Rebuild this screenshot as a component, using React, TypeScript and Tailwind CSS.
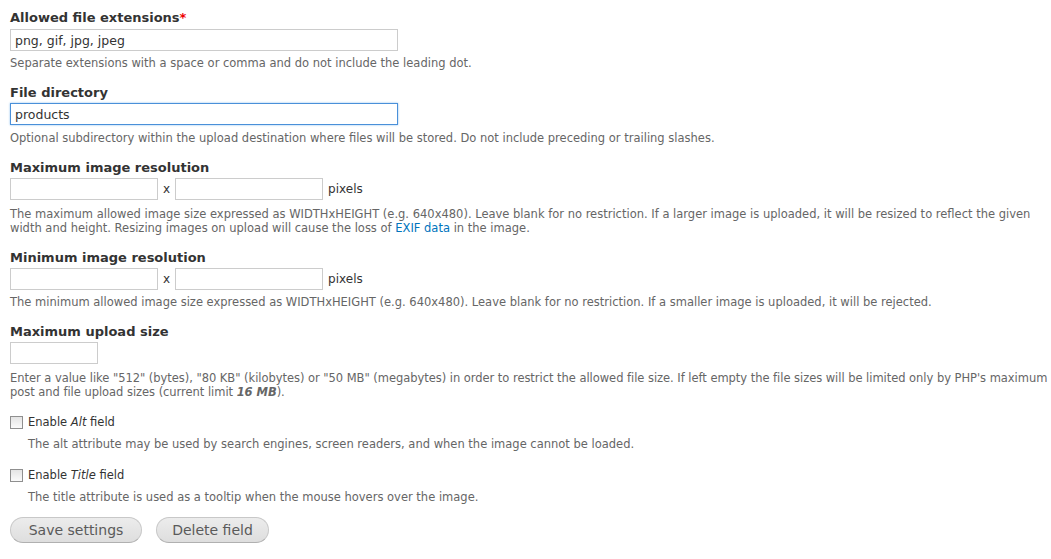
import React from "react";

const font = { fontFamily: '"DejaVu Sans", Verdana, sans-serif' };

function Label({ children, required }: { children: React.ReactNode; required?: boolean }) {
  return (
    <div className="text-[13px] font-bold leading-[18px] text-[#333]">
      {children}
      {required && <span className="text-[#e00]">*</span>}
    </div>
  );
}

function Desc({ children, className = "" }: { children: React.ReactNode; className?: string }) {
  return <div className={`text-[11.5px] leading-[14px] text-[#666] ${className}`}>{children}</div>;
}

function TextInput({ value = "", width, focused }: { value?: string; width: string; focused?: boolean }) {
  return (
    <input
      defaultValue={value}
      className={`block ${width} h-[22px] border px-[4px] text-[12.5px] text-[#333] outline-none ${
        focused ? "border-[#4a90d9] shadow-[0_0_2px_#8ec0ee]" : "border-[#ccc]"
      }`}
    />
  );
}

function Check({ label, em, desc, top }: { label: string; em: string; desc: string; top: string }) {
  return (
    <div className={top}>
      <label className="flex h-[16px] items-center gap-[5px] text-[11.5px] leading-[16px] text-[#333]">
        <span className="h-[13px] w-[13px] border border-[#8f8f8f] bg-gradient-to-b from-[#e4e4e4] to-[#fafafa]" />
        <span>
          {label} <em className="italic">{em}</em> field
        </span>
      </label>
      <Desc className="ml-[18px] mt-[7px]">{desc}</Desc>
    </div>
  );
}

function ResolutionRow() {
  return (
    <div className="mt-[1px] flex items-center gap-[5px] text-[12px] leading-[22px] text-[#333]">
      <TextInput width="w-[148px]" />
      <span>x</span>
      <TextInput width="w-[148px]" />
      <span>pixels</span>
    </div>
  );
}

export default function App() {
  return (
    <div className="min-h-[559px] bg-white pl-[10px] pt-[9px]" style={font}>
      <Label required>Allowed file extensions</Label>
      <div className="mt-[2px]">
        <TextInput value="png, gif, jpg, jpeg" width="w-[388px]" />
      </div>
      <Desc className="mt-[5px]">Separate extensions with a space or comma and do not include the leading dot.</Desc>

      <div className="mt-[14px]">
        <Label>File directory</Label>
        <div className="mt-[1px]">
          <TextInput value="products" width="w-[388px]" focused />
        </div>
        <Desc className="mt-[6px]">
          Optional subdirectory within the upload destination where files will be stored. Do not include preceding or trailing slashes.
        </Desc>
      </div>

      <div className="mt-[14px]">
        <Label>Maximum image resolution</Label>
        <ResolutionRow />
        <Desc className="mt-[7px] pr-[10px]">
          The maximum allowed image size expressed as WIDTHxHEIGHT (e.g. 640x480). Leave blank for no restriction. If a larger image is uploaded, it will be resized to reflect the given width and height. Resizing images on upload will cause the loss of{" "}
          <a className="text-[#0074bd]">EXIF data</a> in the image.
        </Desc>
      </div>

      <div className="mt-[14px]">
        <Label>Minimum image resolution</Label>
        <ResolutionRow />
        <Desc className="mt-[5px]">
          The minimum allowed image size expressed as WIDTHxHEIGHT (e.g. 640x480). Leave blank for no restriction. If a smaller image is uploaded, it will be rejected.
        </Desc>
      </div>

      <div className="mt-[14px]">
        <Label>Maximum upload size</Label>
        <div className="mt-[1px]">
          <TextInput width="w-[88px]" />
        </div>
        <Desc className="mt-[7px] tracking-[-0.04px]">
          Enter a value like "512" (bytes), "80 KB" (kilobytes) or "50 MB" (megabytes) in order to restrict the allowed file size. If left empty the file sizes will be limited only by PHP's maximum post and file upload sizes (current limit <em className="font-bold">16 MB</em>).
        </Desc>
      </div>

      <Check top="mt-[15px]" label="Enable" em="Alt" desc="The alt attribute may be used by search engines, screen readers, and when the image cannot be loaded." />
      <Check top="mt-[16px]" label="Enable" em="Title" desc="The title attribute is used as a tooltip when the mouse hovers over the image." />

      <div className="mt-[13px] flex gap-[14px]">
        <button className="h-[26px] w-[132px] rounded-full border border-[#c8c8c8] border-b-[#b0b0b0] bg-gradient-to-b from-[#ececec] to-[#dedede] text-[14px] leading-[24px] text-[#5a5a5a]">
          Save settings
        </button>
        <button className="h-[26px] w-[113px] rounded-full border border-[#c8c8c8] border-b-[#b0b0b0] bg-gradient-to-b from-[#ececec] to-[#dedede] text-[14px] leading-[24px] text-[#5a5a5a]">
          Delete field
        </button>
      </div>
    </div>
  );
}
